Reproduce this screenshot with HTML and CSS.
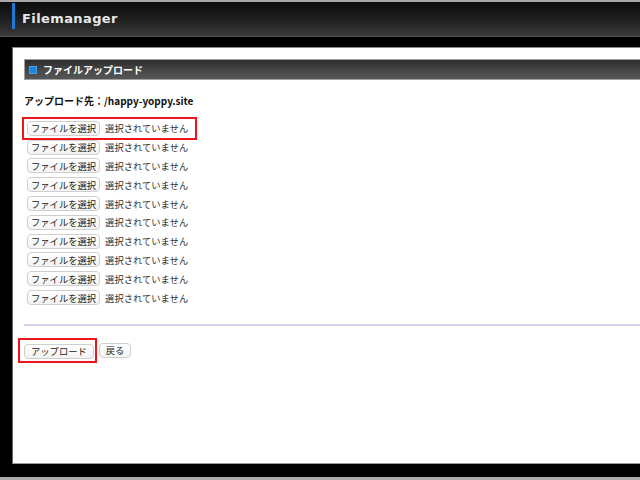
FILE: index.html
```html
<!DOCTYPE html>
<html lang="ja">
<head>
    <meta charset="UTF-8">
    <title>Filemanager</title>
    <link rel="stylesheet" href="styles.css">
</head>
<body>
    <div class="page">
        <div class="topbar">
            <h1 class="brand">Filemanager</h1>
        </div>
        <div class="panel">
            <h2 class="section-title"><span class="mark"></span>ファイルアップロード</h2>
            <p class="dest">アップロード先：/happy-yoppy.site</p>
            <div class="files">
                <div class="file-row highlight"><span class="btn">ファイルを選択</span><span class="none">選択されていません</span></div>
                <div class="file-row"><span class="btn">ファイルを選択</span><span class="none">選択されていません</span></div>
                <div class="file-row"><span class="btn">ファイルを選択</span><span class="none">選択されていません</span></div>
                <div class="file-row"><span class="btn">ファイルを選択</span><span class="none">選択されていません</span></div>
                <div class="file-row"><span class="btn">ファイルを選択</span><span class="none">選択されていません</span></div>
                <div class="file-row"><span class="btn">ファイルを選択</span><span class="none">選択されていません</span></div>
                <div class="file-row"><span class="btn">ファイルを選択</span><span class="none">選択されていません</span></div>
                <div class="file-row"><span class="btn">ファイルを選択</span><span class="none">選択されていません</span></div>
                <div class="file-row"><span class="btn">ファイルを選択</span><span class="none">選択されていません</span></div>
                <div class="file-row"><span class="btn">ファイルを選択</span><span class="none">選択されていません</span></div>
            </div>
            <hr class="sep">
            <div class="actions">
                <span class="highlight"><button class="btn">アップロード</button></span>
                <button class="btn">戻る</button>
            </div>
        </div>
    </div>
</body>
</html>
```

FILE: styles.css
```css
body {
    margin: 0;
    background-color: #000;
    font-family: "Noto Sans CJK JP", "DejaVu Sans", sans-serif;
}
.page {
    height: 480px;
    box-sizing: border-box;
    border-top: 2px solid #a8a8a8;
    border-bottom: 3px solid #aaaaaa;
    display: flex;
    flex-direction: column;
}
.topbar {
    height: 34px;
    flex: none;
    background: linear-gradient(#0b0b0b, #1e1e1e 50%, #3a3a3a);
    border-bottom: 1px solid #555;
}
.brand {
    margin: 1px 0 0 12px;
    height: 26px;
    border-left: 3px solid #1a7ad6;
    padding: 8px 0 0 7px;
    box-sizing: border-box;
    font-family: "DejaVu Sans", sans-serif;
    font-size: 13px;
    line-height: 16px;
    letter-spacing: 0.4px;
    color: #e8e8e8;
}
.panel {
    flex: 1;
    margin: 10px 0 13px 12px;
    background-color: #fff;
    border-top: 1px solid #888;
    border-left: 1px solid #666;
    border-bottom: 1px solid #999;
    padding: 11px 0 0 11px;
}
.section-title {
    margin: 0;
    height: 21px;
    box-sizing: border-box;
    border: 1px solid #a0a0a0;
    border-right: none;
    background: linear-gradient(#2c2c2c, #4a4a4a 60%, #555);
    display: flex;
    align-items: center;
    padding-left: 4px;
    font-size: 10px;
    font-weight: bold;
    color: #fff;
}
.mark {
    width: 6px;
    height: 6px;
    background-color: #1a86e0;
    border: 1px solid #4aa0e8;
    margin-right: 6px;
}
.dest {
    margin: 13px 0 0 0;
    font-size: 10px;
    font-weight: bold;
    color: #111;
    line-height: 16px;
}
.files {
    margin-top: 10px;
}
.file-row {
    display: flex;
    align-items: center;
    height: 18.8px;
    padding-left: 3px;
    white-space: nowrap;
    color: #333;
}
.file-row.highlight {
    width: fit-content;
    padding-right: 7px;
    outline: 2px solid #f0141c;
}
.btn {
    display: inline-flex;
    align-items: center;
    height: 15px;
    box-sizing: border-box;
    padding: 0 3px;
    border: 1px solid #cfcfcf;
    border-radius: 4px;
    background: linear-gradient(#fff, #f3f3f3);
    font-family: "Noto Sans CJK JP", sans-serif;
    font-size: 9.3px;
    color: #222;
    margin-right: 5px;
    white-space: nowrap;
}
.none {
    font-size: 9.3px;
    color: #333;
}
.sep {
    margin: 17px 0 0 0;
    border: none;
    border-top: 2px solid #d6d6ea;
}
.actions {
    margin-top: 12px;
    display: flex;
    align-items: center;
}
.actions .highlight {
    display: inline-flex;
    margin-left: -6px;
    padding: 4px 1px 2px 4px;
    border: 2px solid #f0141c;
    margin-right: 2px;
}
.actions .btn {
    margin-right: 0;
    padding: 0 6px;
}
```
